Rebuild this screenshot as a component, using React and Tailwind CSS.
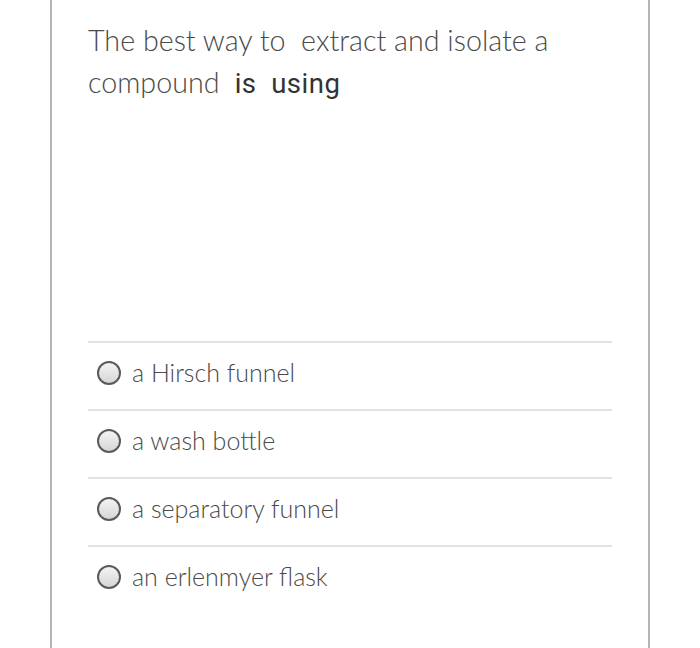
import React from "react";

const options = [
  "a Hirsch funnel",
  "a wash bottle",
  "a separatory funnel",
  "an erlenmyer flask",
];

function Radio() {
  return (
    <span className="inline-block w-[24px] h-[24px] rounded-full border-2 border-[#5a5a5a] bg-gradient-to-b from-[#f4f4f4] to-[#d6d6d6] shrink-0" />
  );
}

export default function App() {
  return (
    <div className="w-[700px] h-[648px] bg-white overflow-hidden">
      <div className="ml-[50px] w-[600px] h-[648px] border-l-2 border-r-2 border-[#b4b4b4] pl-[36px] pr-[36px]">
        {/* Question */}
        <p
          className="pt-[19px] text-[28.7px] leading-[42px] font-light text-[#4a4a4a]"
          style={{ fontFamily: "Lato, 'Liberation Sans', sans-serif" }}
        >
          The best way to&nbsp; extract and isolate a compound{" "}
          <span
            className="font-normal text-[#333] text-[27.5px] tracking-[0.5px]"
            style={{ fontFamily: "Roboto, 'Liberation Sans', sans-serif" }}
          >
            &nbsp;is&nbsp; using
          </span>
        </p>

        {/* Options */}
        <div className="mt-[236px]">
          {options.map((opt) => (
            <div
              key={opt}
              className="h-[68px] border-t-2 border-[#e2e2e2] flex items-center gap-[11px] pl-[9px] pb-[6px]"
            >
              <Radio />
              <span
                className="text-[25px] font-light text-[#4a4a4a]"
                style={{ fontFamily: "Lato, 'Liberation Sans', sans-serif" }}
              >
                {opt}
              </span>
            </div>
          ))}
        </div>
      </div>
    </div>
  );
}
